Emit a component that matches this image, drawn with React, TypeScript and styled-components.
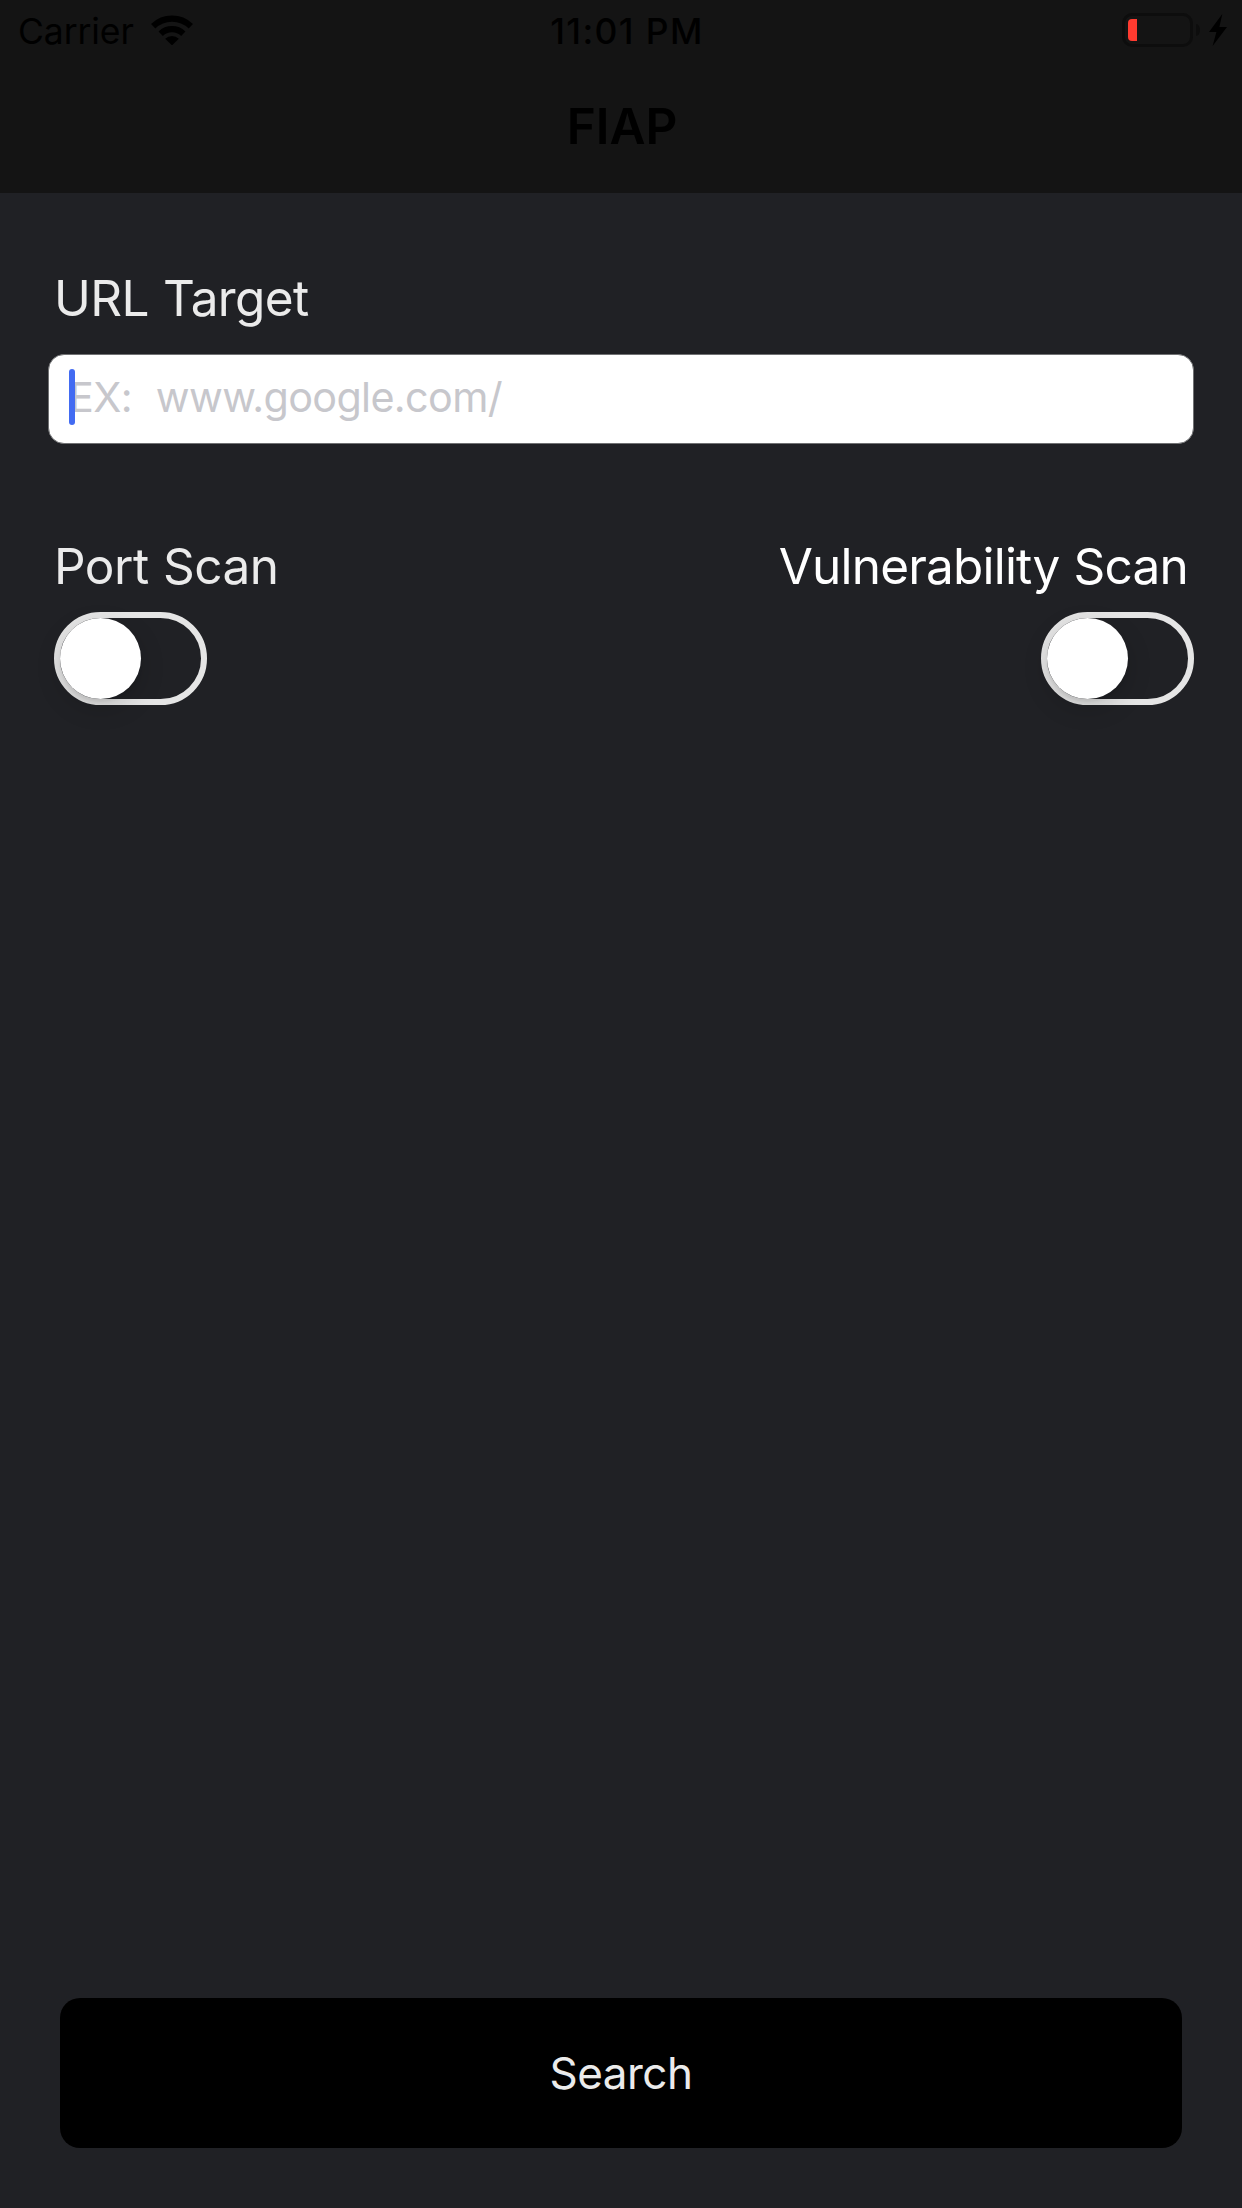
import React, { useState } from "react";
import styled, { createGlobalStyle } from "styled-components";

const GlobalStyle = createGlobalStyle`
  *, *::before, *::after { box-sizing: border-box; }
  body { margin: 0; background: #202125; }
`;

const Screen = styled.div`
  width: 1242px;
  height: 2208px;
  display: flex;
  flex-direction: column;
  overflow: hidden;
  background: #202125;
  font-family: Inter, "Liberation Sans", sans-serif;
`;

const Header = styled.header`
  height: 193px;
  flex: none;
  background: #141414;
  color: #000;
`;

const StatusBar = styled.div`
  height: 62px;
  padding: 0 15px 0 18px;
  display: grid;
  grid-template-columns: 1fr auto 1fr;
  align-items: center;
`;

const StatusGroup = styled.div<{ $end?: boolean }>`
  display: flex;
  align-items: center;
  justify-content: ${(p) => (p.$end ? "flex-end" : "flex-start")};
`;

const StatusText = styled.span<{ $weight: number; $spacing: string }>`
  margin: 1px 0 -1px;
  font-size: 35.5px;
  line-height: 62px;
  font-weight: ${(p) => p.$weight};
  letter-spacing: ${(p) => p.$spacing};
  white-space: nowrap;
`;

const Clock = styled(StatusText)`
  padding-left: 9px;
`;

const WifiIcon = styled.svg`
  width: 42px;
  height: 30px;
  margin: 0 0 2px 17px;
`;

const Battery = styled.div`
  width: 71px;
  height: 34px;
  padding: 3px;
  border: 3px solid #0d0d0d;
  border-radius: 10px;
  margin-bottom: 2px;
`;

const BatteryLevel = styled.div`
  width: 9px;
  height: 22px;
  border-radius: 4px 0 0 4px;
  background: #ff3b30;
`;

const BatteryTip = styled.div`
  width: 4px;
  height: 12px;
  margin: 0 9px 2px 3px;
  border-radius: 0 4px 4px 0 / 0 6px 6px 0;
  background: #0d0d0d;
`;

const BoltIcon = styled.svg`
  width: 18px;
  height: 32px;
  margin-bottom: 2px;
`;

const Title = styled.h1`
  margin: 34px 0 0;
  padding-left: 2px;
  text-align: center;
  font-size: 49.5px;
  line-height: 60px;
  font-weight: 600;
  letter-spacing: 0;
`;

const Form = styled.main`
  flex: 1;
  display: flex;
  flex-direction: column;
  padding: 75px 48px 60px 48px;
`;

const Label = styled.label<{ $color: string; $spacing: string }>`
  display: block;
  font-size: 49.5px;
  line-height: 60px;
  font-weight: 400;
  white-space: nowrap;
  color: ${(p) => p.$color};
  letter-spacing: ${(p) => p.$spacing};
  word-spacing: 1px;
`;

const Field = styled.div`
  display: flex;
  flex-direction: column;
  ${Label} { padding-left: 6px; }
`;

const InputWrap = styled.div`
  position: relative;
  margin-top: 26px;
`;

const Input = styled.input`
  display: block;
  width: 100%;
  height: 90px;
  padding: 0 20px 4px;
  border: 1px solid #707173;
  border-radius: 16px;
  outline: none;
  background: #fff;
  font-family: inherit;
  font-size: 41.3px;
  letter-spacing: -0.65px;
  word-spacing: 1px;
  &::placeholder { color: #c7c7cc; opacity: 1; }
`;

const Caret = styled.span`
  position: absolute;
  left: 21px;
  top: 15px;
  width: 6px;
  height: 56px;
  border-radius: 3px;
  background: #426bf2;
`;

const Options = styled.div`
  display: flex;
  justify-content: space-between;
  margin-top: 92px;
  padding-left: 6px;
`;

const Option = styled.div<{ $end?: boolean }>`
  display: flex;
  flex-direction: column;
  align-items: ${(p) => (p.$end ? "flex-end" : "flex-start")};
  gap: 16px;
  ${Label} { margin-right: ${(p) => (p.$end ? "6px" : "0")}; }
`;

const Track = styled.button<{ $on: boolean }>`
  width: 153px;
  height: 93px;
  padding: 0;
  display: flex;
  justify-content: ${(p) => (p.$on ? "flex-end" : "flex-start")};
  border: 6px solid ${(p) => (p.$on ? "#34c759" : "#e5e5e5")};
  border-radius: 47px;
  background: ${(p) => (p.$on ? "#34c759" : "transparent")};
`;

const Knob = styled.span`
  width: 81px;
  height: 81px;
  border-radius: 50%;
  background: #fff;
  box-shadow: 0 9px 24px rgba(0, 0, 0, 0.17), 0 3px 3px rgba(0, 0, 0, 0.06);
`;

const SearchButton = styled.button`
  height: 150px;
  margin: auto 12px 0;
  border: 0;
  border-radius: 20px;
  background: #000;
  color: #ebebeb;
  font-family: inherit;
  font-size: 44px;
  font-weight: 400;
  letter-spacing: -0.5px;
`;

function Switch({ name }: { name: string }) {
  const [on, setOn] = useState(false);
  return (
    <Track type="button" role="switch" aria-label={name} aria-checked={on} $on={on} onClick={() => setOn(!on)}>
      <Knob />
    </Track>
  );
}

export default function App() {
  return (
    <Screen>
      <GlobalStyle />
      <Header>
        <StatusBar>
          <StatusGroup>
            <StatusText $weight={400} $spacing="-0.1px">Carrier</StatusText>
            <WifiIcon viewBox="0 0 42 30" fill="none" stroke="#000" strokeWidth="6.2">
              <path d="M2.2 11.3a27 27 0 0 1 37.6 0" />
              <path d="M9.7 18.8a16.2 16.2 0 0 1 22.6 0" />
              <path d="M14.2 23.7a9.8 9.8 0 0 1 13.6 0L21 30.4z" fill="#000" stroke="none" />
            </WifiIcon>
          </StatusGroup>
          <Clock $weight={500} $spacing="1.4px">11:01 PM</Clock>
          <StatusGroup $end>
            <Battery><BatteryLevel /></Battery>
            <BatteryTip />
            <BoltIcon viewBox="0 0 18 32" fill="#000">
              <path d="M13.3 0 0 18h7.4L3.6 32 18 13h-7.6z" />
            </BoltIcon>
          </StatusGroup>
        </StatusBar>
        <Title>FIAP</Title>
      </Header>
      <Form>
        <Field>
          <Label htmlFor="target" $color="#ebebeb" $spacing="-0.65px">URL Target</Label>
          <InputWrap>
            <Input id="target" placeholder="EX:  www.google.com/" />
            <Caret />
          </InputWrap>
        </Field>
        <Options>
          <Option>
            <Label as="span" $color="#ebebeb" $spacing="-0.5px">Port Scan</Label>
            <Switch name="Port Scan" />
          </Option>
          <Option $end>
            <Label as="span" $color="#fff" $spacing="-0.8px">Vulnerability Scan</Label>
            <Switch name="Vulnerability Scan" />
          </Option>
        </Options>
        <SearchButton type="button">Search</SearchButton>
      </Form>
    </Screen>
  );
}
